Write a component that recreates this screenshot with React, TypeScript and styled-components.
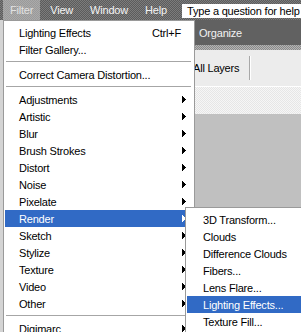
import React, { FC } from 'react';
import styled, { createGlobalStyle } from 'styled-components';

const GlobalStyle = createGlobalStyle`
    html, body {
        margin: 0;
        padding: 0;
        background: #c0c0c0;
    }
    body {
        font-family: 'Liberation Sans', Arial, sans-serif;
        font-size: 11px;
        letter-spacing: -0.2px;
        -webkit-font-smoothing: none;
    }
`;

const dither = (a: string, b: string) => `
    background-color: ${a};
    background-image: repeating-conic-gradient(${a} 0 25%, ${b} 0 50%);
    background-size: 2px 2px;
`;

const Screen = styled.div`
    position: relative;
    width: 301px;
    height: 332px;
    overflow: hidden;
    display: flex;
    flex-direction: column;
`;

const MenuBar = styled.div`
    height: 20px;
    display: flex;
    align-items: center;
    gap: 3px;
    padding-left: 3px;
    ${dither('#5c5c5c', '#7c7c7c')}
`;

const MenuTitle = styled.div<{ $active?: boolean }>`
    height: 20px;
    line-height: 20px;
    padding: 0 7px;
    color: ${(p) => (p.$active ? '#e2e2e2' : '#f4f4f4')};
    ${(p) => (p.$active ? dither('#9a9a9a', '#aaaaaa') : '')}
`;

const HelpBox = styled.div`
    margin-left: auto;
    margin-top: 1px;
    width: 114px;
    height: 14px;
    line-height: 14px;
    padding-left: 5px;
    background: #fff;
    color: #000;
`;

const Workspace = styled.div`
    flex: 1;
    display: flex;
`;

const Gutter = styled.div`
    width: 191px;
    background: #d4d4d4;
`;

const Panel = styled.div`
    flex: 1;
    display: flex;
    flex-direction: column;
    border-left: 1px dotted #222;
`;

const OptionsBar = styled.div`
    height: 25px;
    display: flex;
    align-items: center;
    gap: 2px;
    background: #616161;
    color: #f2f2f2;
`;

const Band = styled.div<{ $h: number; $light?: boolean }>`
    height: ${(p) => p.$h}px;
    ${(p) => (p.$light ? dither('#e6e6e6', '#f6f6f6') : dither('#8a8a8a', '#b4b4b4'))}
`;

const LayersBar = styled.div`
    height: 36px;
    display: flex;
    align-items: center;
    padding-left: 1px;
    background: #ececec;
    color: #000;
    border-bottom: 1px solid #fff;
`;

const Divider = styled.div`
    width: 1px;
    height: 24px;
    margin-left: 10px;
    background: #a8a8a8;
    border-right: 1px solid #fff;
`;

const Canvas = styled.div`
    flex: 1;
    background: #c0c0c0;
`;

const Menu = styled.div<{ $left: number; $top: number; $width: number }>`
    position: absolute;
    left: ${(p) => p.$left}px;
    top: ${(p) => p.$top}px;
    width: ${(p) => p.$width}px;
    padding: 3px 1px 2px;
    background: #fff;
    border: 1px solid #9a9a9a;
    color: #000;
`;

const Item = styled.div<{ $active?: boolean; $indent: number }>`
    height: 17px;
    display: flex;
    align-items: center;
    padding: 0 7px 0 ${(p) => p.$indent}px;
    background: ${(p) => (p.$active ? '#316ac5' : 'transparent')};
    color: ${(p) => (p.$active ? '#fff' : '#000')};
    white-space: nowrap;
`;

const Label = styled.span`
    flex: 1;
`;

const Shortcut = styled.span`
    margin-right: 5px;
`;

const Separator = styled.div`
    height: 1px;
    margin: 3px 2px 4px 1px;
    background: #a6a6a6;
`;

const Arrow: FC = () => (
    <svg width="4" height="7" viewBox="0 0 4 7" shapeRendering="crispEdges" fill="currentColor">
        <path d="M0 0h1v7H0zM1 1h1v5H1zM2 2h1v3H2zM3 3h1v1H3z" />
    </svg>
);

// little dotted handle with blue squares left of "Organize"
const Grip: FC = () => (
    <svg width="5" height="18" viewBox="0 0 5 18" shapeRendering="crispEdges">
        <path d="M0 0h1v1H0zM0 4h1v1H0zM0 8h1v1H0zM0 12h1v1H0zM0 16h1v1H0z" fill="#111" />
        <rect x="0" y="2" width="3" height="3" fill="#3d6fd0" />
        <rect x="0" y="7" width="3" height="3" fill="#3d6fd0" />
        <rect x="0" y="12" width="3" height="3" fill="#3d6fd0" />
    </svg>
);

type Entry = { label: string; shortcut?: string; sub?: boolean; active?: boolean } | 'sep';

const filterItems: Entry[] = [
    { label: 'Lighting Effects', shortcut: 'Ctrl+F' },
    { label: 'Filter Gallery...' },
    'sep',
    { label: 'Correct Camera Distortion...' },
    'sep',
    { label: 'Adjustments', sub: true },
    { label: 'Artistic', sub: true },
    { label: 'Blur', sub: true },
    { label: 'Brush Strokes', sub: true },
    { label: 'Distort', sub: true },
    { label: 'Noise', sub: true },
    { label: 'Pixelate', sub: true },
    { label: 'Render', sub: true, active: true },
    { label: 'Sketch', sub: true },
    { label: 'Stylize', sub: true },
    { label: 'Texture', sub: true },
    { label: 'Video', sub: true },
    { label: 'Other', sub: true },
    'sep',
    { label: 'Digimarc', sub: true },
];

const renderItems: Entry[] = [
    { label: '3D Transform...' },
    { label: 'Clouds' },
    { label: 'Difference Clouds' },
    { label: 'Fibers...' },
    { label: 'Lens Flare...' },
    { label: 'Lighting Effects...', active: true },
    { label: 'Texture Fill...' },
];

const MenuList: FC<{ items: Entry[]; indent: number }> = ({ items, indent }) => (
    <>
        {items.map((it, i) =>
            it === 'sep' ? (
                <Separator key={i} />
            ) : (
                <Item key={i} $active={it.active} $indent={indent}>
                    <Label>{it.label}</Label>
                    {it.shortcut && <Shortcut>{it.shortcut}</Shortcut>}
                    {it.sub && <Arrow />}
                </Item>
            )
        )}
    </>
);

export default function App() {
    return (
        <Screen>
            <GlobalStyle />
            <MenuBar>
                <MenuTitle $active>Filter</MenuTitle>
                <MenuTitle>View</MenuTitle>
                <MenuTitle>Window</MenuTitle>
                <MenuTitle>Help</MenuTitle>
                <HelpBox>Type a question for help</HelpBox>
            </MenuBar>
            <Workspace>
                <Gutter />
                <Panel>
                    <OptionsBar>
                        <Grip />
                        <span>Organize</span>
                    </OptionsBar>
                    <Band $h={5} />
                    <LayersBar>
                        All Layers
                        <Divider />
                    </LayersBar>
                    <Band $h={27} $light />
                    <Canvas />
                </Panel>
            </Workspace>
            <Menu $left={3} $top={20} $width={188}>
                <MenuList items={filterItems} indent={14} />
            </Menu>
            <Menu $left={185} $top={207} $width={130}>
                <MenuList items={renderItems} indent={16} />
            </Menu>
        </Screen>
    );
}
